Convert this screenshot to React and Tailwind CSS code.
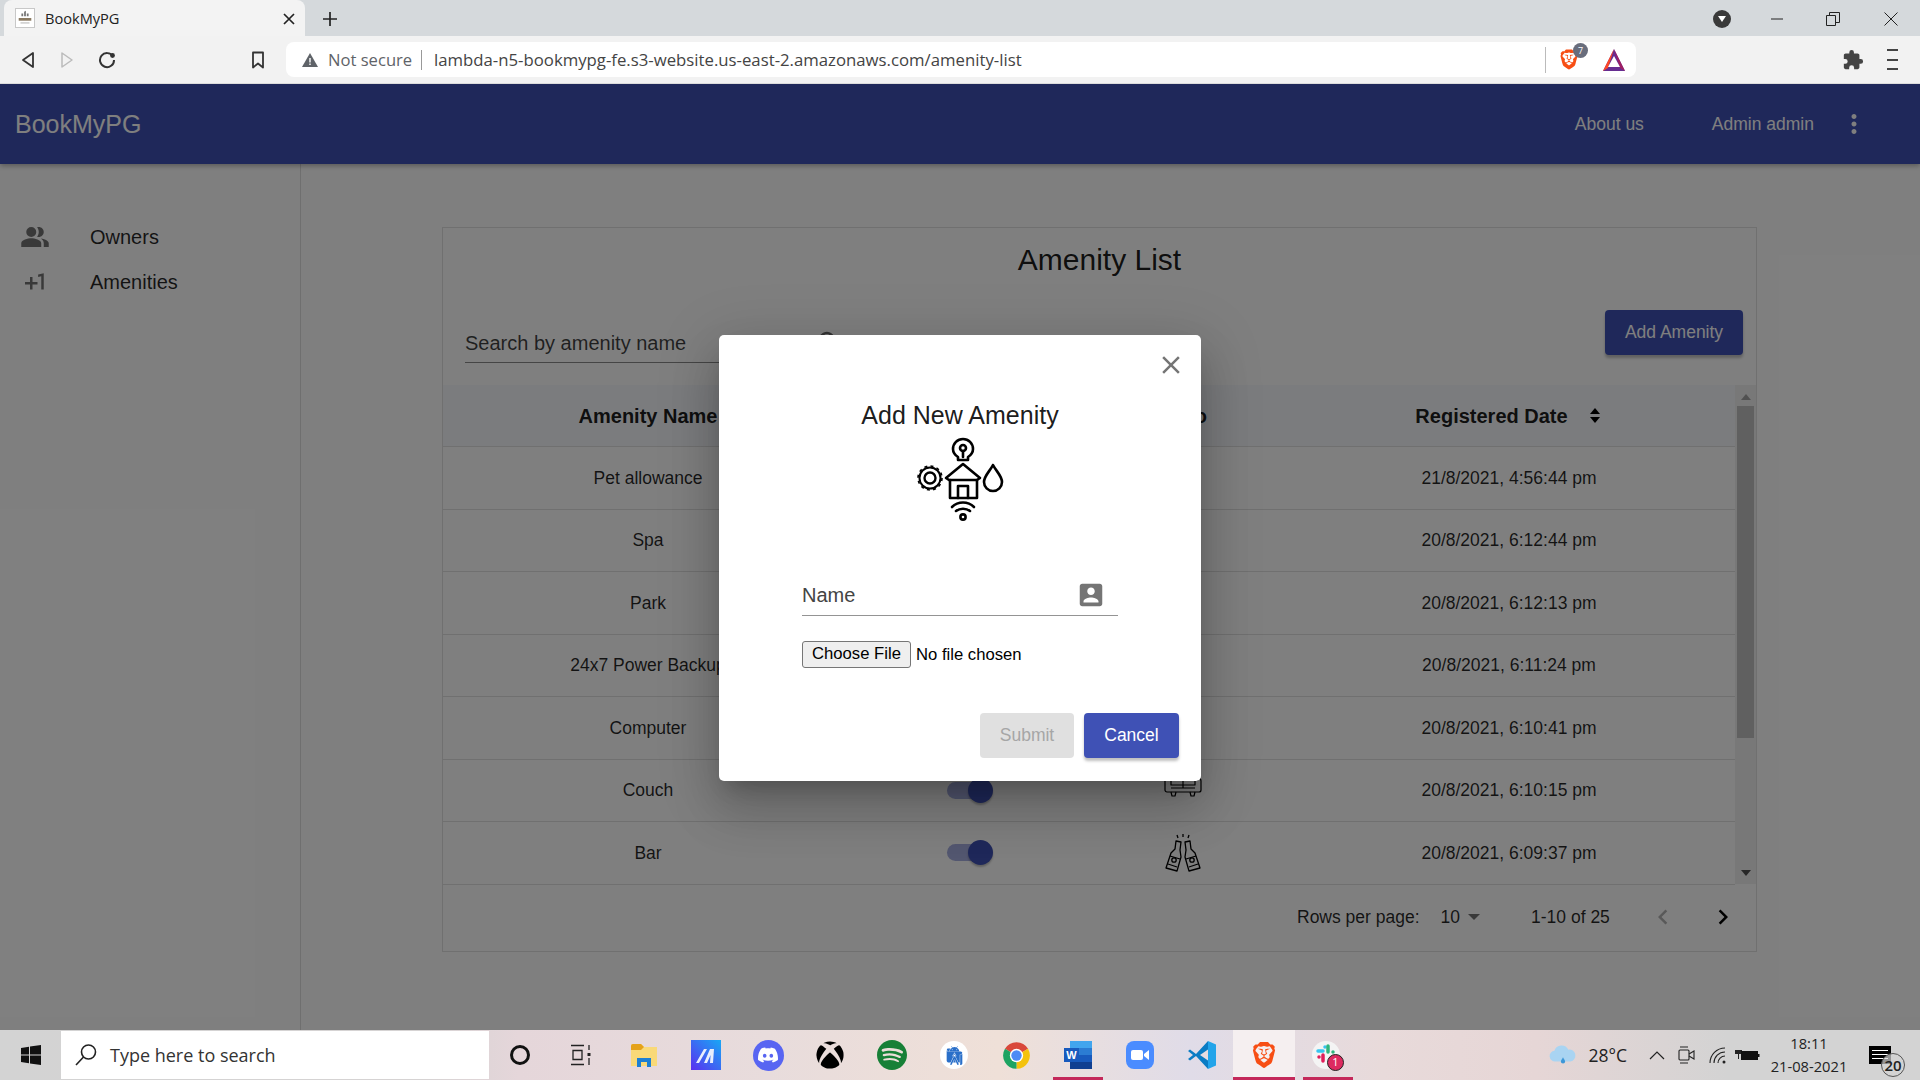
import { SiBrave, SiDiscord, SiSpotify, SiAndroidstudio } from 'react-icons/si';
import { FaXbox } from 'react-icons/fa';

const rows = [
  { name: 'Pet allowance', date: '21/8/2021, 4:56:44 pm' },
  { name: 'Spa', date: '20/8/2021, 6:12:44 pm' },
  { name: 'Park', date: '20/8/2021, 6:12:13 pm' },
  { name: '24x7 Power Backup', date: '20/8/2021, 6:11:24 pm' },
  { name: 'Computer', date: '20/8/2021, 6:10:41 pm' },
  { name: 'Couch', date: '20/8/2021, 6:10:15 pm', logo: 'couch' },
  { name: 'Bar', date: '20/8/2021, 6:09:37 pm', logo: 'bottles' },
];

function MuiIcon({ d, className }) {
  return (
    <svg viewBox="0 0 24 24" className={className} fill="currentColor">
      <path d={d} />
    </svg>
  );
}

const PEOPLE = 'M16.67 13.13C18.04 14.06 19 15.32 19 17v3h4v-3c0-2.18-3.57-3.47-6.33-3.87zM9 4a4 4 0 1 0 0 8 4 4 0 0 0 0-8zM15 12c2.21 0 4-1.79 4-4s-1.79-4-4-4c-.47 0-.91.1-1.33.24C14.5 5.27 15 6.58 15 8s-.5 2.73-1.33 3.76c.42.14.86.24 1.33.24zM9 13c-2.67 0-8 1.34-8 4v3h16v-3c0-2.66-5.33-4-8-4z';
const PLUS_ONE = 'M10 8H8v4H4v2h4v4h2v-4h4v-2h-4zm4.5-1.92V7.9l2.5-.5V18h2V5z';
const ACCOUNT_BOX = 'M3 5v14c0 1.1.89 2 2 2h14c1.1 0 2-.9 2-2V5c0-1.1-.9-2-2-2H5c-1.11 0-2 .9-2 2zm12 4c0 1.66-1.34 3-3 3s-3-1.34-3-3 1.34-3 3-3 3 1.34 3 3zm-9 8c0-2 4-3.1 6-3.1s6 1.1 6 3.1v1H6v-1z';
const MORE_VERT = 'M12 8c1.1 0 2-.9 2-2s-.9-2-2-2-2 .9-2 2 .9 2 2 2zm0 2c-1.1 0-2 .9-2 2s.9 2 2 2 2-.9 2-2-.9-2-2-2zm0 6c-1.1 0-2 .9-2 2s.9 2 2 2 2-.9 2-2-.9-2-2-2z';
const CLOSE = 'M19 6.41L17.59 5 12 10.59 6.41 5 5 6.41 10.59 12 5 17.59 6.41 19 12 13.41 17.59 19 19 17.59 13.41 12z';
const SEARCH = 'M15.5 14h-.79l-.28-.27C15.41 12.59 16 11.11 16 9.5 16 5.91 13.09 3 9.5 3S3 5.91 3 9.5 5.91 16 9.5 16c1.61 0 3.09-.59 4.23-1.57l.27.28v.79l5 4.99L20.49 19l-4.99-5zm-6 0C7.01 14 5 11.99 5 9.5S7.01 5 9.5 5 14 7.01 14 9.5 11.99 14 9.5 14z';

function AmenityIcon() {
  return (
    <svg viewBox="917 435 92 90" className="w-[92px] h-[90px]" fill="none" stroke="#000" strokeWidth="2.6" strokeLinejoin="round" strokeLinecap="round">
      {/* bulb */}
      <path d="M958 457c-3-2-5-5-5-8a10 10 0 0 1 20 0c0 3-2 6-5 8v3h-10z" />
      <circle cx="963" cy="448" r="3" />
      <path d="M963 451v6" />
      {/* gear */}
      <circle cx="930" cy="478" r="5.5" strokeWidth="2.4" />
      <circle cx="930" cy="478" r="10.5" strokeWidth="2" />
      <circle cx="930" cy="478" r="12" strokeWidth="1.6" strokeDasharray="3 3.3" strokeLinecap="butt" />
      {/* house */}
      <path d="M946 478l17-14 17 14-3 2h-28z" />
      <path d="M950 480v18h27v-18" />
      <path d="M958 498v-12h10v12" />
      {/* drop */}
      <path d="M993 465c-3 6-9 11-9 17a9 9 0 0 0 18 0c0-6-6-11-9-17z" />
      {/* wifi */}
      <path d="M952 507c6-6 16-6 22 0" />
      <path d="M956 511c4-3 10-3 14 0" />
      <circle cx="963" cy="517" r="2.6" />
    </svg>
  );
}

function CouchIcon() {
  return (
    <svg viewBox="0 5 40 40" className="w-10 h-10" fill="none" stroke="#000" strokeWidth="1.2" strokeLinejoin="round">
      <path d="M6 16V9h28v7" />
      <path d="M20 9v14" />
      <path d="M2 16a3 3 0 0 1 6 0v4h24v-4a3 3 0 0 1 6 0v9a2 2 0 0 1-2 2H4a2 2 0 0 1-2-2z" />
      <path d="M8 27l1 4h3l1-4M27 27l1 4h3l1-4M8 23h24" />
    </svg>
  );
}

function BottlesIcon() {
  return (
    <svg viewBox="-1 -1 36 39" className="w-[36px] h-[39px] -mt-[1px]" fill="none" stroke="#000" strokeWidth="1.3" strokeLinejoin="round">
      <path d="M10 7l5 1-1 8 1 7-4 14-11-3 5-15 4-4z" />
      <path d="M24 7l-5 1 1 8-1 7 4 14 11-3-5-15-4-4z" />
      <circle cx="8" cy="26" r="2.2" />
      <circle cx="26" cy="26" r="2.2" />
      <path d="M4 22l10 3M30 22l-10 3M2 30l9 3M32 30l-9 3M11 1l1 3M17 0v3M23 1l-1 3" />
    </svg>
  );
}

function Toggle() {
  return (
    <div className="flex items-center w-[46px]">
      <div className="w-[42px] h-[17px] rounded-full bg-[#a7aee0] shrink-0" />
      <div className="w-[25px] h-[25px] rounded-full bg-[#3f51b5] -ml-[21px] shrink-0 shadow-[0_2px_2px_rgba(0,0,0,.25)]" />
    </div>
  );
}

function BrowserChrome() {
  return (
    <div className="shrink-0 font-['Open_Sans',sans-serif] text-[#333]">
      {/* tab strip */}
      <div className="h-9 bg-[#d5d9dc] flex items-center pl-[4px]">
        <div className="w-[301px] h-9 bg-[#f3f3f3] rounded-t-lg flex items-center pl-[11px] pr-[10px]">
          <svg viewBox="0 0 20 20" className="w-5 h-5 shrink-0 border border-[#c8c8c8] bg-white">
            <path d="M9 3l2-1v6H9zM6 5h2v3H6zM12 5h2v3h-2z" fill="#777" />
            <rect x="3" y="10" width="14" height="3" fill="#8a7a62" />
            <rect x="5" y="15" width="10" height="1" fill="#aaa" />
          </svg>
          <span className="ml-[10px] mt-[1px] text-[14.6px] text-[#222] flex-1">BookMyPG</span>
          <svg viewBox="0 0 12 12" className="w-3 h-3 mt-[1px]" stroke="#222" strokeWidth="1.7"><path d="M1 1l10 10M11 1L1 11" /></svg>
        </div>
        <svg viewBox="0 0 16 16" className="w-4 h-4 ml-[17px] mt-[1px]" stroke="#222" strokeWidth="1.7"><path d="M8 1v14M1 8h14" /></svg>
        <div className="flex-1" />
        <div className="w-[18px] h-[18px] rounded-full bg-[#3a3a3a] flex items-center justify-center mr-[39px] mt-[1px]">
          <div className="w-0 h-0 border-x-[4px] border-x-transparent border-t-[6px] border-t-white" />
        </div>
        <svg viewBox="0 0 14 14" className="w-[14px] h-[14px] mr-[42px] mt-[1px]" stroke="#222"><path d="M1 7h12" /></svg>
        <svg viewBox="0 0 14 14" className="w-[14px] h-[14px] mr-[44px] mt-[1px]" fill="none" stroke="#222"><path d="M.5 3.5h9v10h-9zM3.5 3.5v-3h10v10h-4" /></svg>
        <svg viewBox="0 0 14 14" className="w-[14px] h-[14px] mr-[22px] mt-[1px]" stroke="#222"><path d="M.5.5l13 13M13.5.5l-13 13" /></svg>
      </div>
      {/* toolbar */}
      <div className="h-12 bg-[#f2f2f2] border-b border-[#dcdcdc] flex items-center">
        <svg viewBox="0 0 14 18" className="w-[14px] h-[18px] ml-[21px]" fill="none" stroke="#333" strokeWidth="1.8" strokeLinejoin="round"><path d="M12 2v14L2 9z" /></svg>
        <svg viewBox="0 0 14 18" className="w-[14px] h-[18px] ml-[25px]" fill="none" stroke="#bbb" strokeWidth="1.5" strokeLinejoin="round"><path d="M2 2v14l10-7z" /></svg>
        <svg viewBox="0 0 18 18" className="w-[18px] h-[18px] ml-[24px]" fill="none" stroke="#333" strokeWidth="2"><path d="M15 5.5A7 7 0 1 0 16 9" /><circle cx="14.5" cy="4.5" r="2.4" fill="#333" stroke="none" /></svg>
        <svg viewBox="0 0 14 18" className="w-[14px] h-[18px] ml-[135px]" fill="none" stroke="#333" strokeWidth="1.8" strokeLinejoin="round"><path d="M2 1.5h10v15l-5-4-5 4z" /></svg>
        <div className="w-[1350px] h-[35px] ml-[21px] bg-white rounded-lg flex items-center pl-[16px]">
          <svg viewBox="0 0 16 14" className="w-4 h-[14px] shrink-0"><path d="M8 0l8 14H0z" fill="#5f6368" /><path d="M7.3 5h1.4v4.5H7.3zM7.3 10.5h1.4V12H7.3z" fill="#fff" /></svg>
          <span className="ml-[10px] mt-[1px] text-[#5f6368] text-[16.6px] w-[83px] whitespace-nowrap">Not secure</span>
          <div className="w-px h-[20px] bg-[#999] ml-[10px]" />
          <span className="ml-[12px] mt-[1px] text-[16.75px] text-[#444] whitespace-nowrap w-[1111px]">lambda-n5-bookmypg-fe.s3-website.us-east-2.amazonaws.com/amenity-list</span>
          <div className="w-px h-[26px] bg-[#bbb] shrink-0" />
          <div className="relative ml-[13px] shrink-0">
            <SiBrave className="w-[20px] h-[27px] text-[#f74e14]" />
            <span className="absolute -top-[3px] left-[14px] w-[15px] h-[15px] rounded-full bg-[#686d7c] text-white text-[9px] flex items-center justify-center">7</span>
          </div>
          <svg viewBox="0 0 24 24" className="w-6 h-6 ml-[23px] shrink-0">
            <path d="M12 1L1 23h22z" fill="#662d91" />
            <path d="M12 1L1 23l5-3z" fill="#ff4724" />
            <path d="M12 1l11 22-5-3z" fill="#9e1f63" />
            <path d="M12 8L6 19h12z" fill="#fff" />
          </svg>
        </div>
        <svg viewBox="0 0 24 24" className="w-[22px] h-[22px] ml-[206px]" fill="#444"><path d="M20.5 11H19V7c0-1.1-.9-2-2-2h-4V3.5a2.5 2.5 0 0 0-5 0V5H4c-1.1 0-2 .9-2 2v3.8h1.5a2.7 2.7 0 0 1 0 5.4H2V20c0 1.1.9 2 2 2h3.8v-1.5a2.7 2.7 0 0 1 5.4 0V22H17c1.1 0 2-.9 2-2v-4h1.5a2.5 2.5 0 0 0 0-5z" /></svg>
        <div className="ml-[23px] w-[11px] h-[21px] flex flex-col justify-between">
          <div className="h-[2px] bg-[#444]" />
          <div className="h-[2px] bg-[#444]" />
          <div className="h-[2px] bg-[#444]" />
        </div>
      </div>
    </div>
  );
}

function AppBar() {
  return (
    <div className="h-20 shrink-0 bg-[#3f51b5] text-white flex items-center pl-[15px] shadow-[0_2px_5px_rgba(0,0,0,.3)] relative">
      <span className="text-[25px] mt-[1px]">BookMyPG</span>
      <div className="flex-1" />
      <span className="text-[17.5px]">About us</span>
      <span className="text-[17.5px] ml-[68px]">Admin admin</span>
      <MuiIcon d={MORE_VERT} className="w-[30px] h-[30px] ml-[25px] mr-[51px]" />
    </div>
  );
}

function Sidebar() {
  return (
    <div className="w-[301px] shrink-0 border-r border-[#dedede] pt-[50px] text-[20px] text-black/85">
      <div className="h-[45px] flex items-center pl-[20px]">
        <MuiIcon d={PEOPLE} className="w-[30px] h-[30px] text-black/55" />
        <span className="ml-[40px]">Owners</span>
      </div>
      <div className="h-[45px] flex items-center pl-[20px]">
        <MuiIcon d={PLUS_ONE} className="w-[30px] h-[30px] text-black/55" />
        <span className="ml-[40px]">Amenities</span>
      </div>
    </div>
  );
}

function AmenityTable() {
  return (
    <div className="flex h-[499px]">
      <div className="flex-1">
        <div className="grid grid-cols-[410px_232px_195px_1fr] h-[62px] items-center bg-[#f6f9fd] border-b border-[#e0e0e0] text-[20px] font-bold text-center text-black/90">
          <span>Amenity Name</span>
          <span />
          <span>Logo</span>
          <span className="flex items-center justify-center gap-[22px]">
            Registered Date
            <span className="flex flex-col gap-[3px]">
              <span className="w-0 h-0 border-x-[5px] border-x-transparent border-b-[6px] border-b-black" />
              <span className="w-0 h-0 border-x-[5px] border-x-transparent border-t-[6px] border-t-black" />
            </span>
          </span>
        </div>
        {rows.map((row) => (
          <div key={row.name} className="grid grid-cols-[410px_232px_195px_1fr] h-[62.5px] items-center border-b border-[#e0e0e0] text-[17.5px] text-center text-black/85">
            <span>{row.name}</span>
            <span className="flex justify-center pl-[1px]"><Toggle /></span>
            <span className="flex justify-center">
              {row.logo === 'couch' && <CouchIcon />}
              {row.logo === 'bottles' && <BottlesIcon />}
            </span>
            <span className="pl-[3px]">{row.date}</span>
          </div>
        ))}
      </div>
      {/* scrollbar */}
      <div className="w-[21px] h-full bg-[#f1f1f1] flex flex-col items-center pt-[9px]">
        <div className="w-0 h-0 border-x-[5px] border-x-transparent border-b-[6px] border-b-[#a3a3a3]" />
        <div className="w-[17px] h-[332px] bg-[#c1c1c1] mt-[6px]" />
        <div className="flex-1" />
        <div className="w-0 h-0 border-x-[5px] border-x-transparent border-t-[6px] border-t-[#505050] mb-[8px]" />
      </div>
    </div>
  );
}

function AmenityCard() {
  return (
    <div className="w-[1315px] h-[725px] mt-[63px] ml-[141px] border border-[#e0e0e0]">
      <h2 className="text-[30px] text-center leading-[36px] pt-[14px] h-[49px] text-black/90">Amenity List</h2>
      <div className="flex items-start mt-[33px] h-[75px] pl-[22px] pr-[13px]">
        <div className="w-[420px] h-[52px] mt-[1px] border-b border-[#8a8a8a] flex items-center justify-between pt-[12px]">
          <span className="text-[20px] text-black/75">Search by amenity name</span>
          <MuiIcon d={SEARCH} className="w-[30px] h-[30px] text-black/60 mr-[40px]" />
        </div>
        <div className="flex-1" />
        <button className="w-[138px] h-[45px] rounded bg-[#3f51b5] text-white text-[17.5px] shadow-[0_3px_3px_rgba(0,0,0,.25)]">Add Amenity</button>
      </div>
      <AmenityTable />
      <div className="h-[66px] flex items-center text-[17.5px] text-black/85">
        <span className="ml-[854px]">Rows per page:</span>
        <span className="ml-[21px]">10</span>
        <span className="ml-[8px] w-0 h-0 border-x-[6px] border-x-transparent border-t-[6px] border-t-black/55" />
        <span className="ml-[51px]">1-10 of 25</span>
        <svg viewBox="0 0 24 24" className="w-[30px] h-[30px] ml-[38px] text-black/30" fill="currentColor"><path d="M15.41 7.41L14 6l-6 6 6 6 1.41-1.41L10.83 12z" /></svg>
        <svg viewBox="0 0 24 24" className="w-[30px] h-[30px] ml-[30px] text-black" fill="currentColor"><path d="M10 6L8.59 7.41 13.17 12l-4.58 4.59L10 18l6-6z" /></svg>
      </div>
    </div>
  );
}

function AddAmenityDialog() {
  return (
    <div className="w-[482px] h-[446px] mt-[2px] bg-white rounded-[5px] shadow-[0_14px_19px_-9px_rgba(0,0,0,.2),0_30px_48px_4px_rgba(0,0,0,.14),0_11px_58px_10px_rgba(0,0,0,.12)]">
      <div className="flex justify-end pt-[15px] pr-[15px] h-[45px]">
        <MuiIcon d={CLOSE} className="w-[30px] h-[30px] text-[#757575]" />
      </div>
      <h3 className="text-[25px] leading-[30px] mt-[20px] text-center text-black/90">Add New Amenity</h3>
      <div className="flex justify-center mt-[5px] pl-[6px]">
        <AmenityIcon />
      </div>
      <div className="mt-[47px] ml-[83px] w-[316px] h-[44px] border-b-[1.5px] border-[#949494] flex items-center justify-between pr-[12px] pt-[3px]">
        <span className="text-[20px] text-[#444]">Name</span>
        <MuiIcon d={ACCOUNT_BOX} className="w-[30px] h-[30px] text-[#757575]" />
      </div>
      <div className="mt-[25px] ml-[83px] flex items-center text-[16.67px] text-black">
        <button className="w-[109px] h-[27px] bg-[#efefef] border border-[#767676] rounded-[3px] leading-none">Choose File</button>
        <span className="ml-[5px]">No file chosen</span>
      </div>
      <div className="mt-[45px] flex justify-end gap-[10px] pr-[22px] text-[17.5px]">
        <button className="w-[94px] h-[45px] rounded bg-[#e0e0e0] text-[#a6a6a6]">Submit</button>
        <button className="w-[95px] h-[45px] rounded bg-[#3f51b5] text-white shadow-[0_3px_3px_rgba(0,0,0,.25)]">Cancel</button>
      </div>
    </div>
  );
}

function TaskIcon({ children, className = '' }) {
  return <div className={`w-[62px] h-[50px] flex items-center justify-center shrink-0 ${className}`}>{children}</div>;
}

function Taskbar() {
  return (
    <div className="h-[50px] shrink-0 flex items-center text-[#222] font-['Open_Sans',sans-serif] bg-[linear-gradient(90deg,#d3d3d3_0%,#d6d3d3_22%,#e5d6da_27%,#e8dcdc_40%,#efe0d8_52%,#e0dce8_62%,#e8dada_72%,#e6d6d6_80%,#d3d3d3_90%)]">
      <div className="w-[61px] flex justify-center shrink-0">
        <svg viewBox="0 0 20 20" className="w-5 h-5" fill="#111"><path d="M0 3l8-1.2V9.5H0zM9 1.6L20 0v9.5H9zM0 10.5h8v7.7L0 17zM9 10.5h11V20L9 18.4z" /></svg>
      </div>
      <div className="w-[428px] h-12 bg-white flex items-center shrink-0 pl-[13px]">
        <svg viewBox="0 0 24 24" className="w-[24px] h-[24px]" fill="none" stroke="#222" strokeWidth="1.6"><circle cx="14.5" cy="9" r="7" /><path d="M9.5 14L2 22" /></svg>
        <span className="ml-[12px] text-[18px] text-[#333]">Type here to search</span>
      </div>
      <TaskIcon><div className="w-[20px] h-[20px] rounded-full border-[3px] border-[#111]" /></TaskIcon>
      <TaskIcon>
        <svg viewBox="0 0 22 22" className="w-[22px] h-[22px] mr-[3px]" fill="none" stroke="#222" strokeWidth="1.3"><path d="M1 1.5h13M3 6.5h9v9H3zM1 20.5h13M19 1v5M19 14v7" /><rect x="17.5" y="9" width="3" height="3" fill="#222" stroke="none" /></svg>
      </TaskIcon>
      <TaskIcon>
        <svg viewBox="0 0 28 28" className="w-[28px] h-[28px]">
          <path d="M1 5a2 2 0 0 1 2-2h8l3 3h13v19H1z" fill="#f9d978" />
          <path d="M1 5a2 2 0 0 1 2-2h8l3 3-3 3H1z" fill="#e5a21a" />
          <path d="M7 17h14v9h-4v-5h-6v5H7z" fill="#1d7fd3" />
        </svg>
      </TaskIcon>
      <TaskIcon>
        <svg viewBox="0 0 30 30" className="w-[30px] h-[30px]">
          <defs><linearGradient id="mx" x1="0" y1="1" x2="1" y2="0"><stop offset="0" stopColor="#5b2ff0" /><stop offset="1" stopColor="#18a8f5" /></linearGradient></defs>
          <rect width="30" height="30" fill="url(#mx)" />
          <path d="M5 23l8-14h3l-8 14zM13 23l6-14h4l-1 14h-3l.6-8-3.6 8z" fill="#e8eefc" />
        </svg>
      </TaskIcon>
      <TaskIcon><div className="w-[31px] h-[31px] rounded-full bg-[#5865f2] flex items-center justify-center"><SiDiscord className="w-[20px] h-[20px] text-white" /></div></TaskIcon>
      <TaskIcon><FaXbox className="w-[28px] h-[28px] text-black" /></TaskIcon>
      <TaskIcon><SiSpotify className="w-[30px] h-[30px] text-[#178037]" /></TaskIcon>
      <TaskIcon><div className="w-[28px] h-[28px] rounded-full bg-white flex items-center justify-center"><SiAndroidstudio className="w-[19px] h-[19px] text-[#2a6fc9]" /></div></TaskIcon>
      <TaskIcon>
        <svg viewBox="0 0 24 24" className="w-[29px] h-[29px]">
          <path d="M12 12L2.47 6.5A11 11 0 0 1 21.53 6.5Z" fill="#d9483b" />
          <path d="M12 12L21.53 6.5A11 11 0 0 1 12 23Z" fill="#f4c20d" />
          <path d="M12 12L12 23A11 11 0 0 1 2.47 6.5Z" fill="#1da462" />
          <circle cx="12" cy="12" r="5.5" fill="#fff" />
          <circle cx="12" cy="12" r="4.3" fill="#4c8bf5" />
        </svg>
      </TaskIcon>
      <TaskIcon className="relative">
        <svg viewBox="0 0 30 30" className="w-[30px] h-[30px]">
          <rect x="7" y="1" width="22" height="7" fill="#41a5ee" />
          <rect x="7" y="8" width="22" height="7" fill="#2b7cd3" />
          <rect x="7" y="15" width="22" height="7" fill="#185abd" />
          <rect x="7" y="22" width="22" height="7" fill="#103f91" />
          <rect x="1" y="8" width="15" height="14" fill="#185abd" />
          <text x="8.5" y="19" fontSize="11" fontWeight="700" fill="#fff" textAnchor="middle" fontFamily="Liberation Sans, sans-serif">W</text>
        </svg>
        <div className="absolute bottom-0 left-[6px] w-[50px] h-[3px] bg-[#c4285a]" />
      </TaskIcon>
      <TaskIcon>
        <div className="w-[28px] h-[28px] rounded-[8px] bg-[#4a8cff] flex items-center justify-center gap-[1px]">
          <div className="w-[12px] h-[10px] rounded-[2px] bg-white" />
          <svg viewBox="0 0 5 10" className="w-[5px] h-[10px]" fill="#fff"><path d="M0 4l5-4v10L0 6z" /></svg>
        </div>
      </TaskIcon>
      <TaskIcon>
        <svg viewBox="0 0 30 30" className="w-[30px] h-[30px]">
          <path d="M21 1L9 14 3 9.5 1 11l5 4-5 4 2 1.5L9 16l12 13z" fill="#0a7cc4" />
          <path d="M21 1l8 3.5v21L21 29V1z" fill="#23a4ea" />
          <path d="M21 9.5L13 15l8 5.5z" fill="#e6dce0" />
        </svg>
      </TaskIcon>
      <TaskIcon className="relative bg-[#f5eff0]">
        <SiBrave className="w-[26px] h-[30px] text-[#f74e14]" />
        <div className="absolute bottom-0 inset-x-0 h-[3px] bg-[#c4285a]" />
      </TaskIcon>
      <TaskIcon className="relative">
        <div className="relative w-[28px] h-[28px] rounded-full bg-[#f4f4f4]">
          <svg viewBox="0 0 28 28" className="w-[28px] h-[28px]" strokeWidth="3.5" strokeLinecap="round">
            <path d="M13 6v0M11 10H6" stroke="#36c5f0" />
            <path d="M16 5v6M21 11h0" stroke="#2eb67d" />
            <path d="M11 14v6M7 16h0" stroke="#e01e5a" />
          </svg>
          <span className="absolute -right-[4px] -bottom-[2px] w-[17px] h-[17px] rounded-full bg-[#dd2a60] border border-[#222] text-white text-[11px] flex items-center justify-center">1</span>
        </div>
        <div className="absolute bottom-0 left-[8px] w-[50px] h-[3px] bg-[#c4285a]" />
      </TaskIcon>
      <div className="flex-1" />
      <svg viewBox="0 0 28 22" className="w-[30px] h-[24px]">
        <path d="M7 17a5 5 0 0 1-1-10 7 7 0 0 1 13-1 5.5 5.5 0 0 1 2 11z" fill="#a9d4f2" />
        <path d="M14 13c-1 2-2 3-2 4a2 2 0 0 0 4 0c0-1-1-2-2-4z" fill="#3d97d8" />
      </svg>
      <span className="ml-[10px] text-[17.5px]">28°C</span>
      <svg viewBox="0 0 16 10" className="w-4 h-[10px] ml-[22px]" fill="none" stroke="#222" strokeWidth="1.2"><path d="M1 9l7-7 7 7" /></svg>
      <svg viewBox="0 0 18 20" className="w-[18px] h-5 ml-[13px]" fill="none" stroke="#222" strokeWidth="1.1"><rect x="1" y="5" width="10" height="10" rx="1" /><path d="M11 9l5-3v8l-5-3M2 2h8M2 18h8" /></svg>
      <svg viewBox="0 0 18 18" className="w-[18px] h-[18px] ml-[13px]" fill="none" stroke="#222" strokeWidth="1.1"><path d="M1 17A15 15 0 0 1 16 2M5 17A11 11 0 0 1 16 6M9 17a7 7 0 0 1 7-7" /><circle cx="15" cy="16" r="1.5" fill="#222" stroke="none" /></svg>
      <svg viewBox="0 0 26 16" className="w-[26px] h-4 ml-[7px]"><path d="M3 0v3M6 0v3M1 3h7v4H5v5H4V7H1z" fill="#222" /><rect x="7" y="4" width="17" height="9" fill="#111" /><rect x="24" y="7" width="1.5" height="3" fill="#111" /></svg>
      <div className="w-[94px] ml-[2px] text-center text-[14.7px] leading-[23px] text-[#222]">
        <div>18:11</div>
        <div>21-08-2021</div>
      </div>
      <div className="relative w-[22px] h-[18px] bg-black ml-[13px] mr-[29px]">
        <div className="absolute left-[3px] right-[3px] top-[4px] h-px bg-white" />
        <div className="absolute left-[3px] right-[3px] top-[8px] h-px bg-white" />
        <div className="absolute left-[3px] right-[3px] top-[12px] h-px bg-white" />
        <span className="absolute -right-[14px] top-[7px] w-[24px] h-[24px] rounded-full border border-[#555] bg-[#d3d3d3]/70 text-[15px] font-semibold flex items-center justify-center">20</span>
      </div>
    </div>
  );
}

export default function App() {
  return (
    <div className="h-screen w-[1920px] flex flex-col overflow-hidden font-['Liberation_Sans',Arial,sans-serif] bg-white">
      <BrowserChrome />
      <div className="relative flex-1 flex flex-col overflow-hidden">
        <AppBar />
        <div className="flex flex-1">
          <Sidebar />
          <AmenityCard />
        </div>
        {/* Modal backdrop */}
        <div className="absolute inset-0 bg-black/50 flex items-center justify-center">
          <AddAmenityDialog />
        </div>
      </div>
      <Taskbar />
    </div>
  );
}
